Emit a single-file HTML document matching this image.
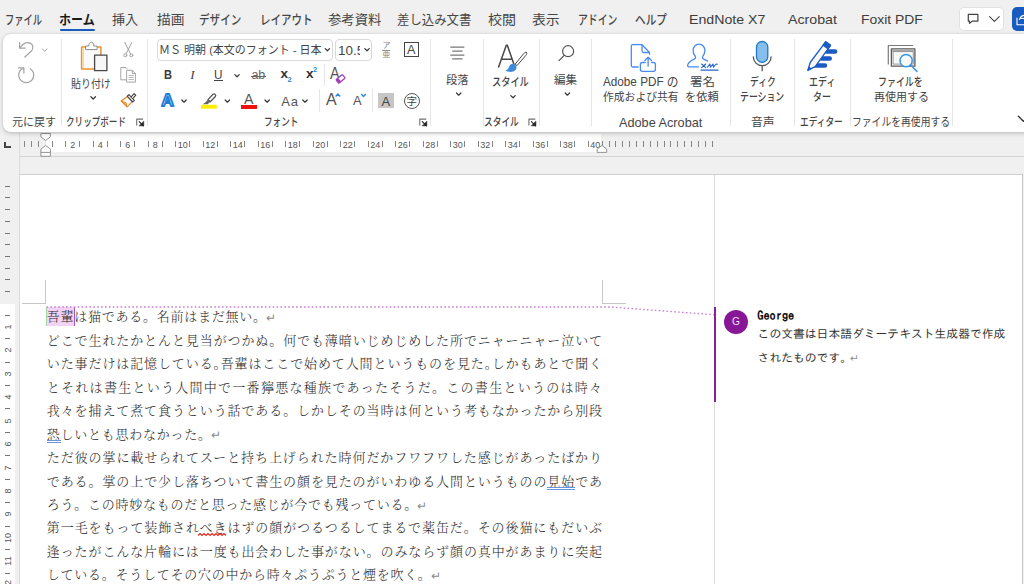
<!DOCTYPE html>
<html lang="ja"><head><meta charset="utf-8"><title>Word</title>
<style>
html,body{margin:0;padding:0}
body{width:1024px;height:584px;overflow:hidden;background:#f0f0f0;position:relative;font-family:'Liberation Sans', 'Noto Sans CJK JP', sans-serif;color:#242424}
.a{position:absolute}
.t{position:absolute;white-space:nowrap;line-height:1;transform-origin:0 50%;color:#454545}
.ic{height:auto;transform:translateY(-50%)}
.sep{position:absolute;width:1px;background:#e6e6e6;top:39px;height:87px}
.bl{position:absolute;white-space:nowrap;font-family:'Liberation Serif', 'Noto Serif CJK SC', serif;font-size:13px;letter-spacing:.75px;line-height:20px;height:20px;left:46.800px;width:556px;color:#2a2a2a;font-weight:300}
.bl.j{text-align:justify;text-align-last:justify}
.hp{letter-spacing:-6.100px}
.pm{letter-spacing:0;color:#8c8c8c;font-family:'DejaVu Sans',sans-serif;font-size:11.5px;margin-left:-1px;position:relative;top:0.5px}
.rn{position:absolute;font-size:9px;line-height:10px;color:#555;width:20px;text-align:center;top:139.5px;font-family:'Liberation Sans', 'Noto Sans CJK JP', sans-serif}
.rt{position:absolute;width:1px;height:6px;top:141px;background:#858585}
.vt{position:absolute;left:5px;width:5px;height:1px;background:#777}
.vn{position:absolute;font-size:9px;line-height:10px;color:#555;width:20px;height:10px;text-align:center;left:-2.5px;transform:rotate(-90deg);font-family:'Liberation Sans', 'Noto Sans CJK JP', sans-serif}
</style></head><body>

<div class="a" style="left:46px;top:134px;width:555px;height:18px;background:#fff"></div>
<div class="a" style="left:19.5px;top:156px;width:1005px;height:1px;background:#d4d4d4"></div>
<div class="a" style="left:4px;top:142px;width:2px;height:6px;background:#444"></div><div class="a" style="left:4px;top:146px;width:7px;height:2px;background:#444"></div>
<div class="rt" style="left:51.6px"></div>
<div class="rt" style="left:65.3px"></div>
<div class="rt" style="left:79.1px"></div>
<div class="rt" style="left:92.8px"></div>
<div class="rt" style="left:106.6px"></div>
<div class="rt" style="left:120.3px"></div>
<div class="rt" style="left:134.1px"></div>
<div class="rt" style="left:147.8px"></div>
<div class="rt" style="left:161.6px"></div>
<div class="rt" style="left:175.3px"></div>
<div class="rt" style="left:189.1px"></div>
<div class="rt" style="left:202.8px"></div>
<div class="rt" style="left:216.6px"></div>
<div class="rt" style="left:230.3px"></div>
<div class="rt" style="left:244.1px"></div>
<div class="rt" style="left:257.8px"></div>
<div class="rt" style="left:271.6px"></div>
<div class="rt" style="left:285.3px"></div>
<div class="rt" style="left:299.1px"></div>
<div class="rt" style="left:312.8px"></div>
<div class="rt" style="left:326.6px"></div>
<div class="rt" style="left:340.3px"></div>
<div class="rt" style="left:354.1px"></div>
<div class="rt" style="left:367.8px"></div>
<div class="rt" style="left:381.6px"></div>
<div class="rt" style="left:395.3px"></div>
<div class="rt" style="left:409.1px"></div>
<div class="rt" style="left:422.8px"></div>
<div class="rt" style="left:436.6px"></div>
<div class="rt" style="left:450.3px"></div>
<div class="rt" style="left:464.1px"></div>
<div class="rt" style="left:477.8px"></div>
<div class="rt" style="left:491.6px"></div>
<div class="rt" style="left:505.3px"></div>
<div class="rt" style="left:519.1px"></div>
<div class="rt" style="left:532.8px"></div>
<div class="rt" style="left:546.6px"></div>
<div class="rt" style="left:560.3px"></div>
<div class="rt" style="left:574.1px"></div>
<div class="rt" style="left:587.8px"></div>
<div class="rn" style="left:62.7px">2</div>
<div class="rn" style="left:90.2px">4</div>
<div class="rn" style="left:117.7px">6</div>
<div class="rn" style="left:145.2px">8</div>
<div class="rn" style="left:172.7px">10</div>
<div class="rn" style="left:200.2px">12</div>
<div class="rn" style="left:227.7px">14</div>
<div class="rn" style="left:255.2px">16</div>
<div class="rn" style="left:282.7px">18</div>
<div class="rn" style="left:310.2px">20</div>
<div class="rn" style="left:337.7px">22</div>
<div class="rn" style="left:365.2px">24</div>
<div class="rn" style="left:392.7px">26</div>
<div class="rn" style="left:420.2px">28</div>
<div class="rn" style="left:447.7px">30</div>
<div class="rn" style="left:475.2px">32</div>
<div class="rn" style="left:502.7px">34</div>
<div class="rn" style="left:530.2px">36</div>
<div class="rn" style="left:557.7px">38</div>
<div class="rn" style="left:585.2px">40</div>
<div class="rt" style="left:37.8px"></div>
<div class="rt" style="left:31.0px"></div>
<div class="rt" style="left:24.1px"></div>
<div class="rt" style="left:601.6px"></div>
<div class="rt" style="left:608.5px"></div>
<div class="rt" style="left:615.3px"></div>
<div class="rt" style="left:622.2px"></div>
<div class="rt" style="left:629.1px"></div>
<div class="rt" style="left:636.0px"></div>
<div class="rt" style="left:642.8px"></div>
<div class="rt" style="left:649.7px"></div>
<div class="rt" style="left:656.6px"></div>
<div class="rt" style="left:663.5px"></div>
<div class="rt" style="left:670.3px"></div>
<div class="rt" style="left:677.2px"></div>
<div class="rt" style="left:684.1px"></div>
<div class="rt" style="left:691.0px"></div>
<div class="rt" style="left:697.8px"></div>
<div class="rt" style="left:704.7px"></div>
<div class="rt" style="left:711.6px"></div>
<svg class="a" style="left:39px;top:132px" width="14" height="26" viewBox="39 132 14 26"><path d="M40.900 133.500h9.500v3.300l-4.750 3.700-4.750-3.700z" fill="#fff" stroke="#929292" stroke-width="1"/><path d="M40.900 156.300h9.500v-7.200l-4.750-3.700-4.750 3.700z M40.900 152.400h9.500" fill="#fff" stroke="#929292" stroke-width="1"/></svg>
<svg class="a" style="left:595px;top:144px" width="14" height="10" viewBox="595 144 14 10"><path d="M597.200 152.400h9.500v-3.300l-4.750-3.700-4.750 3.700z" fill="#fff" stroke="#929292" stroke-width="1"/></svg>
<div class="a" style="left:19px;top:133px;width:1px;height:451px;background:#dcdcdc"></div>
<div class="a" style="left:20px;top:174px;width:1003px;height:420px;background:#fff;border-top:1px solid #cfcfcf;border-right:1px solid #c6c6c6;box-sizing:border-box"></div>
<div class="a" style="left:714px;top:175px;width:1px;height:409px;background:#d9d9d9"></div>
<div class="a" style="left:0;top:304px;width:15px;height:280px;background:#fff"></div>
<div class="vt" style="top:291.2px"></div>
<div class="vt" style="top:279.4px"></div>
<div class="vt" style="top:267.7px"></div>
<div class="vt" style="top:256.0px"></div>
<div class="vt" style="top:244.3px"></div>
<div class="vt" style="top:232.5px"></div>
<div class="vt" style="top:220.8px"></div>
<div class="vt" style="top:209.1px"></div>
<div class="vt" style="top:197.4px"></div>
<div class="vt" style="top:185.6px"></div>
<div class="vt" style="top:314.6px"></div>
<div class="vn" style="top:321.8px">1</div>
<div class="vt" style="top:338.1px"></div>
<div class="vn" style="top:345.3px">2</div>
<div class="vt" style="top:361.5px"></div>
<div class="vn" style="top:368.8px">3</div>
<div class="vt" style="top:385.0px"></div>
<div class="vn" style="top:392.2px">4</div>
<div class="vt" style="top:408.4px"></div>
<div class="vn" style="top:415.6px">5</div>
<div class="vt" style="top:431.9px"></div>
<div class="vn" style="top:439.1px">6</div>
<div class="vt" style="top:455.3px"></div>
<div class="vn" style="top:462.5px">7</div>
<div class="vt" style="top:478.8px"></div>
<div class="vn" style="top:486.0px">8</div>
<div class="vt" style="top:502.2px"></div>
<div class="vn" style="top:509.4px">9</div>
<div class="vt" style="top:525.7px"></div>
<div class="vn" style="top:532.9px">10</div>
<div class="vt" style="top:549.1px"></div>
<div class="vn" style="top:556.3px">11</div>
<div class="vt" style="top:572.6px"></div>
<div class="vn" style="top:579.8px">12</div>
<div class="a" style="left:45px;top:280px;width:1px;height:24px;background:#c6c6c6"></div><div class="a" style="left:22px;top:303px;width:24px;height:1px;background:#c6c6c6"></div>
<div class="a" style="left:602px;top:280px;width:1px;height:24px;background:#c6c6c6"></div><div class="a" style="left:602px;top:303px;width:24px;height:1px;background:#c6c6c6"></div>
<div class="a" style="left:46.5px;top:306.5px;width:27.5px;height:19px;background:#f2d3f6"></div>
<div class="a" style="left:46px;top:307px;width:1px;height:19px;background:#a6d8a6"></div>
<div class="a" style="left:74px;top:307px;width:1px;height:19px;background:#b054c2"></div>
<svg class="a" style="left:40px;top:300px" width="680" height="20" viewBox="0 0 680 20"><path d="M6.500 7H570L674 14.700" fill="none" stroke="#c77dd2" stroke-width="1.3" stroke-dasharray="1.600 2.300"/></svg>
<div class="bl" style="top:307.4px">吾輩は猫である。名前はまだ無い。<span class="pm">↵</span></div>
<div class="bl j" style="top:330.8px">どこで生れたかとんと見当がつかぬ。何でも薄暗いじめじめした所でニャーニャー泣いて</div>
<div class="bl j" style="top:354.3px">いた事だけは記憶している<span class="hp">。</span>吾輩はここで始めて人間というものを見た<span class="hp">。</span>しかもあとで聞く</div>
<div class="bl j" style="top:377.8px">とそれは書生という人間中で一番獰悪な種族であったそうだ。この書生というのは時々</div>
<div class="bl j" style="top:401.2px">我々を捕えて煮て食うという話である。しかしその当時は何という考もなかったから別段</div>
<div class="bl" style="top:424.6px">恐しいとも思わなかった。<span class="pm">↵</span></div>
<div class="bl j" style="top:448.1px">ただ彼の掌に載せられてスーと持ち上げられた時何だかフワフワした感じがあったばかり</div>
<div class="bl j" style="top:471.5px">である。掌の上で少し落ちついて書生の顔を見たのがいわゆる人間というものの見始であ</div>
<div class="bl" style="top:495.0px">ろう。この時妙なものだと思った感じが今でも残っている。<span class="pm">↵</span></div>
<div class="bl j" style="top:518.4px">第一毛をもって装飾されべきはずの顔がつるつるしてまるで薬缶だ。その後猫にもだいぶ</div>
<div class="bl j" style="top:541.9px">逢ったがこんな片輪には一度も出会わした事がない。のみならず顔の真中があまりに突起</div>
<div class="bl" style="top:565.3px">している。そうしてその穴の中から時々ぷうぷうと煙を吹く。<span class="pm">↵</span></div>
<div class="a" style="left:46.5px;top:440.0px;width:14.0px;height:3px;border-top:1px solid #6a94e0;border-bottom:1px solid #6a94e0;box-sizing:border-box"></div>
<div class="a" style="left:547.0px;top:487.0px;width:27.5px;height:3px;border-top:1px solid #6a94e0;border-bottom:1px solid #6a94e0;box-sizing:border-box"></div>
<svg class="a" style="left:198px;top:532px" width="30" height="5" viewBox="0 0 30 5"><path d="M0 3.500l2-2 2 2 2-2 2 2 2-2 2 2 2-2 2 2 2-2 2 2 2-2 2 2 2-2 2 2" fill="none" stroke="#e5241c" stroke-width="1.100"/></svg>
<div class="a" style="left:714px;top:306.5px;width:2.4px;height:95px;background:#8a1f9c"></div>
<div class="a" style="left:724px;top:310px;width:24px;height:24px;border-radius:50%;background:#881798"></div>
<span class="t" style="left:724px;top:322px;width:24px;text-align:center;font-size:10.2px;height:10.2px;margin-top:-5.3px;color:rgba(255,255,255,.88)">G</span>
<span class="t" style="left:757.3px;top:315.3px;font-size:12.3px;height:12.3px;margin-top:-6.15px;font-family:'IPAGothic', 'Noto Sans CJK JP', sans-serif;font-weight:700;color:#111">George</span>
<span class="t" style="left:757.6px;top:334.3px;font-size:11.8px;height:11.8px;margin-top:-5.9px;font-family:'IPAGothic', 'Noto Sans CJK JP', sans-serif;color:#333">この文書は日本語ダミーテキスト生成器で作成</span>
<span class="t" style="left:757.6px;top:357.6px;font-size:11.8px;height:11.8px;margin-top:-5.9px;font-family:'IPAGothic', 'Noto Sans CJK JP', sans-serif;color:#333">されたものです。<span class="pm" style="font-size:10.500px;margin-left:-2px;top:0">↵</span></span>
<div class="a" style="left:60px;top:28.500px;width:34.600px;height:2.300px;background:#185abd;border-radius:1px"></div>
<div class="a" style="left:958.8px;top:7px;width:45.4px;height:23.5px;box-sizing:border-box;border:1px solid #e1e1e1;border-radius:5px;background:#fff"></div>
<svg class="a" style="left:959px;top:7px" width="46" height="24" viewBox="959 7 46 24" fill="none"><path d="M968.300 14.400h9.600v6.800h-5.800l-2.600 2.200v-2.200h-1.200z" stroke="#444" stroke-width="1.200" stroke-linejoin="round"/><path d="M989.600 16.700l4.800 4.700 4.800-4.700" stroke="#444" stroke-width="1.100" stroke-linecap="round" stroke-linejoin="round"/></svg>
<div class="a" style="left:1012px;top:7px;width:24px;height:23.5px;border-radius:5px;background:#185abd"></div>
<svg class="a" style="left:1012px;top:7px" width="12" height="24" viewBox="1012 7 12 24" fill="none" stroke="#fff" stroke-width="1.100"><path d="M1017 17.700v7h8"/><path d="M1019.500 20c.3-2.600 2-4.300 5-4.700"/><path d="M1020.300 18.400h4"/></svg>
<div class="a" style="left:3px;top:34px;width:1040px;height:97.5px;background:#fff;border-radius:8px;box-shadow:0 1.5px 4px rgba(0,0,0,.17),0 0 2px rgba(0,0,0,.10)"></div>
<div class="sep" style="left:60.5px"></div>
<div class="sep" style="left:147px"></div>
<div class="sep" style="left:430.2px"></div>
<div class="sep" style="left:483.1px"></div>
<div class="sep" style="left:539.1px"></div>
<div class="sep" style="left:591px"></div>
<div class="sep" style="left:730px"></div>
<div class="sep" style="left:793.5px"></div>
<div class="sep" style="left:850.2px"></div>
<div class="sep" style="left:952px"></div>
<div class="sep" style="left:323.5px;top:64px;height:22px"></div>
<div class="sep" style="left:318.5px;top:89px;height:23px"></div>
<div class="sep" style="left:371.8px;top:89px;height:23px"></div>
<div class="a" style="left:156.5px;top:39px;width:176px;height:22px;box-sizing:border-box;border:1px solid #d9d9d9;border-radius:4px;background:#fff"></div>
<div class="a" style="left:335.2px;top:39px;width:36.6px;height:22px;box-sizing:border-box;border:1px solid #d9d9d9;border-radius:4px;background:#fff"></div>
<!-- undo/redo -->
<svg class="a" style="left:0;top:34px" width="160" height="98" viewBox="0 34 160 98" fill="none" stroke-linecap="round" stroke-linejoin="round">
<g stroke="#a3a3a3" stroke-width="1.2">
<path d="M19.600 42.500v5.600h5.600"/><path d="M19.900 47.800C22.500 44.300 26 42 29.300 42.800C33.300 43.800 34 48.500 31.200 51.300L24.800 57"/>
<path d="M42.300 48.800l2.400 2.400 2.400-2.400" stroke-width="1"/>
<path d="M18.600 67.900h5.300v5.300"/><path d="M23.600 68.200C20.600 69.300 18.700 72 18.700 75.100a7.500 7.500 0 1 0 11.600-6.300"/>
</g>
<!-- paste -->
<path d="M81.600 46.900h19.300v22.200h-19.300z" fill="#fafafa" stroke="#e8912d" stroke-width="1.500"/>
<path d="M82.400 47.700h1.600v20.600h-1.600z" fill="#fbd7a0" stroke="none"/>
<path d="M85.500 49.200v-3.200h3.300c0-2.200 1-3.800 2.500-3.800s2.500 1.600 2.500 3.800h3.300v3.200z" fill="#fff" stroke="#8c8c8c" stroke-width="1"/>
<path d="M94.600 55.200h12.300v15.500h-12.300z" fill="#f7f7f7" stroke="#484848" stroke-width="1.300"/>
<!-- scissors -->
<g stroke="#a0a0a0" stroke-width="1">
<path d="M124.800 42.400l5.600 11.200M131.800 42.400l-5.600 11.200"/><circle cx="125.300" cy="55.300" r="1.500"/><circle cx="131.300" cy="55.300" r="1.500"/>
</g>
<!-- copy -->
<g stroke="#a6a6a6" stroke-width="1">
<path d="M126.500 79.800h-5.700v-12.300h5.200l1.500 1.500"/>
<path d="M127 70.300h5.200l3.200 3.200v8.600h-8.400z" fill="#fff"/><path d="M132.200 70.300v3.200h3.200"/><path d="M129 75.500h4.400M129 77.500h4.400M129 79.500h4.400" stroke-width="0.900" stroke="#b0b0b0"/>
</g>
<!-- format painter -->
<path d="M121.200 101l6.300-4.600 4.800 5.300-5.200 5.200z" fill="#fff" stroke="#e8862a" stroke-width="1.200"/>
<path d="M121.600 101.200l4.400 1.400 1 3.700z" fill="#f2a24a" stroke="#e8862a" stroke-width="0.800"/>
<path d="M127.200 96.200l1.700-1.500 5.400 5.700-1.600 1.600z" fill="#fff" stroke="#444" stroke-width="1.100"/>
<path d="M131.200 96.800l2.900-3.200 1.700 1.600-2.900 3.200" fill="#fff" stroke="#444" stroke-width="1.100"/>
<!-- paste chevron -->
<path d="M90.900 96.700l2.300 2.300 2.300-2.300" stroke="#3a3a3a" stroke-width="1.250"/>
</svg>
<!-- font group text icons -->
<span class="t ic" style="left:163.600px;top:75px;font-size:13.200px;font-weight:700;color:#3a3a3a;transform:translateY(-50%) scaleX(.84)">B</span>
<span class="t ic" style="left:190.300px;top:75.100px;font-size:13.200px;font-style:italic;font-family:'Liberation Serif',serif;color:#444">I</span>
<span class="t ic" style="left:213.600px;top:74.700px;font-size:12.600px;color:#444;transform:translateY(-50%) scaleX(.93)">U</span>
<div class="a" style="left:213.500px;top:80px;width:9px;height:1px;background:#444"></div>
<span class="t ic" style="left:251.500px;top:74.6px;font-size:12.5px;color:#666;letter-spacing:-0.3px">ab</span>
<div class="a" style="left:250.500px;top:76.2px;width:15.500px;height:1px;background:#666"></div>
<span class="t ic" style="left:280.400px;top:74px;font-size:13.5px;font-weight:700;color:#333">x</span>
<span class="t ic" style="left:287.500px;top:80.400px;font-size:7.500px;font-weight:700;color:#2b88d8">2</span>
<span class="t ic" style="left:306.100px;top:74px;font-size:13.5px;font-weight:700;color:#333">x</span>
<span class="t ic" style="left:313.100px;top:70px;font-size:7.500px;font-weight:700;color:#2b88d8">2</span>
<span class="t ic" style="left:329.800px;top:73.3px;font-size:16.3px;color:#555;transform:translateY(-50%) scaleX(.88)">A</span>
<svg class="a" style="left:333px;top:72px" width="15" height="14" viewBox="333 72 15 14"><g transform="rotate(-40 340.600 78.900)"><rect x="336.400" y="76.600" width="8.400" height="4.600" rx=".8" fill="#fff" stroke="#a33fb8" stroke-width="1.250"/><rect x="336.400" y="76.600" width="3" height="4.600" fill="#a33fb8"/></g></svg>
<!-- row 3 -->
<svg class="a" style="left:156px;top:90px" width="24" height="21" viewBox="156 90 24 21"><text x="167.650" y="106.250" text-anchor="middle" font-family="'Liberation Sans',sans-serif" font-weight="700" font-size="16.800" fill="#fff" stroke="#1e7fd6" stroke-width="1.750" stroke-linejoin="round" transform="translate(167.650 0) scale(1.04 1) translate(-167.650 0)">A</text></svg>
<svg class="a" style="left:199px;top:91px" width="20" height="19" viewBox="199 91 20 19" fill="none"><path d="M208 99.600l5-5.300c1.400-1.300 3.500.700 2.300 2.200l-5 5.300z" stroke="#555" stroke-width="1.300" stroke-linejoin="round"/><path d="M202.700 104.300l2.800-2 2.500-2.700 2.300 2.200-2.600 2.500z" fill="#666" stroke="none"/><rect x="201" y="104.800" width="15.800" height="3.900" fill="#ffee00"/></svg>
<span class="t ic" style="left:243.900px;top:98.5px;font-size:14.2px;color:#555">A</span>
<div class="a" style="left:241px;top:104.800px;width:15.600px;height:3.900px;background:#f01010"></div>
<span class="t ic" style="left:281.200px;top:100.600px;font-size:13px;color:#555;letter-spacing:1px">Aa</span>
<span class="t ic" style="left:325.500px;top:99.800px;font-size:17.200px;color:#555;transform:translateY(-50%) scaleX(.93)">A</span>
<span class="t ic" style="left:352.600px;top:100.500px;font-size:13.700px;color:#555;transform:translateY(-50%) scaleX(.94)">A</span>
<svg class="a" style="left:334px;top:92px" width="34" height="7" viewBox="334 92 34 7" fill="none" stroke="#2b88d8" stroke-width="1.400"><path d="M335.600 96.500l2.300-2.400 2.300 2.400"/><path d="M361.200 94l2.300 2.400 2.300-2.400"/></svg>
<div class="a" style="left:378.100px;top:92.800px;width:15.800px;height:15.600px;background:#c8c6c4"></div>
<span class="t ic" style="left:381.500px;top:100.700px;font-size:13px;color:#444">A</span>
<div class="a" style="left:403.600px;top:92.500px;width:16.100px;height:16.100px;border:1.100px solid #555;border-radius:50%;box-sizing:border-box"></div>
<span class="t ic" style="left:406.400px;top:100.8px;font-size:10.500px;color:#444">字</span>
<!-- top right of font group -->
<span class="t ic" style="left:382.600px;top:45.600px;font-size:8px;color:#858585">ア</span>
<div class="a" style="left:382.400px;top:50.400px;width:7.400px;height:1px;background:#999"></div>
<span class="t ic" style="left:382.200px;top:54.600px;font-size:8px;color:#858585">亜</span>
<div class="a" style="left:404px;top:41.800px;width:15.200px;height:15.400px;border:1.200px solid #444;box-sizing:border-box"></div>
<span class="t ic" style="left:407.100px;top:49.900px;font-size:12.600px;color:#444">A</span>
<!-- big icons -->
<svg class="a" style="left:440px;top:38px" width="584" height="38" viewBox="440 38 584 38" fill="none" stroke-linecap="round" stroke-linejoin="round">
<!-- paragraph -->
<g stroke="#787878" stroke-width="1.25" stroke-linecap="butt"><path d="M450.300 47.200h14.100M452.200 51.050h10.300M450.300 55h14.100M452.200 58.900h10.300"/></g>
<!-- styles A -->
<g stroke="#484848" stroke-width="1.500"><path d="M498.600 67l7.700-21.700h1l7.600 21.700M501.600 59.300h10.500"/></g>
<path d="M526.300 52.400c.9.700.5 1.800-.300 2.800l-9 10.400-1.800-1.500 8.700-10.700c.8-.9 1.600-1.600 2.400-1z" fill="#fff" stroke="#484848" stroke-width="1"/>
<path d="M505.200 70.400c2.300-.2 3.300-1.800 4-3.900.8-2.300 3.200-3.300 5.300-2.200 2.100 1.200 2.800 3.700 1 5.700-2.300 2.500-7 2.400-10.300.4z" fill="#3d8bdb" stroke="none"/>
<!-- search -->
<g stroke="#555" stroke-width="1.200"><circle cx="568.100" cy="51.200" r="5.500"/><path d="M564.200 55.300l-5.200 5.400"/></g>
<!-- pdf -->
<g stroke="#4a8af4" stroke-width="1.300">
<path d="M638.200 67h-5.400a1.500 1.500 0 0 1-1.500-1.500v-19.300a1.500 1.500 0 0 1 1.500-1.500h9.200l7.500 7.800v1.800"/><path d="M642 44.900v6.100a1.500 1.500 0 0 0 1.500 1.500h5.800"/>
<path d="M645.200 62.500h-2.800a2 2 0 0 0-2 2v4.800a2 2 0 0 0 2 2h11a2 2 0 0 0 2-2v-4.800a2 2 0 0 0-2-2h-1.700"/><path d="M648.100 66.200v-8.700M644.800 60.500l3.300-3.200 3.400 3.200"/>
</g>
<!-- sign -->
<g stroke="#4a8af4" stroke-width="1.300">
<path d="M698.400 66.800h-9.400c-1.300 0-1.600-1-1.200-2.200 1-2.900 3.600-4.300 6-5.300 1.700-.7 2.200-1.800 1.400-3-1.300-1.500-2.100-3.500-2.100-5.700 0-3.700 2.500-6.500 5.900-6.500s5.900 2.800 5.900 6.500c0 2.200-.8 4.200-2.100 5.700-.8 1.200-.3 2.300 1.400 3 1.200.5 2.400 1 3.400 1.800"/>
</g>
<g stroke="#2364d2" stroke-width="1.100"><path d="M701.600 64l4.200 3.600M705.800 64l-4.200 3.600"/><path d="M707.500 67.200l2.400-3.200.6 3.200 2.500-3.200.5 3.200 2.600-3.200 1.300.200"/><path d="M701.100 70.100h16.900" stroke-width="1.400"/></g>
<!-- mic -->
<rect x="756.500" y="41.500" width="11.300" height="20.800" rx="5.650" fill="#86bfec" stroke="#1e78c8" stroke-width="1.300"/>
<path d="M753.300 56.800a8.900 8.900 0 0 0 17.800 0M762.200 65.700v5" stroke="#555" stroke-width="1.300"/>
<!-- editor -->
<g stroke="#1b5cc4" stroke-width="4.600"><path d="M826.500 51.500h8.600M821.500 58.500h8.200M815.500 65.500h9.400"/></g>
<path d="M825.600 41.800l4.900 3.500-15.300 21.300-7.300 3.600 2.300-7.700z" fill="#f8f8f8" stroke="#1b5cc4" stroke-width="1.300"/>
<path d="M825.600 41.800l4.900 3.500-2.500 3.500-4.900-3.500z" fill="#1b5cc4" stroke="#1b5cc4" stroke-width="1.300"/>
<path d="M807.900 70.200l1-3.200 2 1.600z" fill="#1b5cc4" stroke="#1b5cc4" stroke-width="1"/>
<!-- reuse -->
<path d="M888.300 64.600v-19.100h24.800" stroke="#7a7a7a" stroke-width="1.200" stroke-linecap="butt"/>
<rect x="891.400" y="48.800" width="23.500" height="17.400" fill="#fff" stroke="#5a5a5a" stroke-width="1.300"/>
<rect x="892" y="49.400" width="22.300" height="2.200" fill="#a8a8a8" stroke="none"/>
<rect x="893.500" y="51.600" width="19.800" height="12.500" fill="#f8f8f8" stroke="#8a8a8a" stroke-width="0.900"/>
<circle cx="906.100" cy="60.600" r="6.100" fill="#fafafa" stroke="#3a96dd" stroke-width="1.500"/><path d="M910.500 65l6.500 6.400" stroke="#3a96dd" stroke-width="1.500"/>
</svg>

<span class="t" id="l0" style="left:5.4px;top:19.7px;font-size:13px;height:13px;margin-top:-6.50px;font-family:'Liberation Sans', 'Noto Sans CJK JP', sans-serif;transform:scaleX(0.7121);;font-weight:500">ファイル</span>
<span class="t" id="l1" style="left:59.0px;top:19.7px;font-size:13px;height:13px;margin-top:-6.50px;font-family:'Liberation Sans', 'Noto Sans CJK JP', sans-serif;transform:scaleX(0.9248);font-weight:700;color:#1a1a1a">ホーム</span>
<span class="t" id="l2" style="left:112.0px;top:19.7px;font-size:13px;height:13px;margin-top:-6.50px;font-family:'Liberation Sans', 'Noto Sans CJK JP', sans-serif;transform:scaleX(1.0082);">挿入</span>
<span class="t" id="l3" style="left:156.8px;top:19.7px;font-size:13px;height:13px;margin-top:-6.50px;font-family:'Liberation Sans', 'Noto Sans CJK JP', sans-serif;transform:scaleX(1.0561);">描画</span>
<span class="t" id="l4" style="left:199.0px;top:19.7px;font-size:13px;height:13px;margin-top:-6.50px;font-family:'Liberation Sans', 'Noto Sans CJK JP', sans-serif;transform:scaleX(0.8128);;font-weight:500">デザイン</span>
<span class="t" id="l5" style="left:259.7px;top:19.7px;font-size:13px;height:13px;margin-top:-6.50px;font-family:'Liberation Sans', 'Noto Sans CJK JP', sans-serif;transform:scaleX(0.8075);;font-weight:500">レイアウト</span>
<span class="t" id="l6" style="left:327.6px;top:19.7px;font-size:13px;height:13px;margin-top:-6.50px;font-family:'Liberation Sans', 'Noto Sans CJK JP', sans-serif;transform:scaleX(1.0280);">参考資料</span>
<span class="t" id="l7" style="left:397.0px;top:19.7px;font-size:13px;height:13px;margin-top:-6.50px;font-family:'Liberation Sans', 'Noto Sans CJK JP', sans-serif;transform:scaleX(0.9541);">差し込み文書</span>
<span class="t" id="l8" style="left:487.9px;top:19.7px;font-size:13px;height:13px;margin-top:-6.50px;font-family:'Liberation Sans', 'Noto Sans CJK JP', sans-serif;transform:scaleX(1.0804);">校閲</span>
<span class="t" id="l9" style="left:532.3px;top:19.7px;font-size:13px;height:13px;margin-top:-6.50px;font-family:'Liberation Sans', 'Noto Sans CJK JP', sans-serif;transform:scaleX(1.0667);">表示</span>
<span class="t" id="l10" style="left:577.8px;top:19.7px;font-size:13px;height:13px;margin-top:-6.50px;font-family:'Liberation Sans', 'Noto Sans CJK JP', sans-serif;transform:scaleX(0.7584);;font-weight:500">アドイン</span>
<span class="t" id="l11" style="left:635.0px;top:19.7px;font-size:13px;height:13px;margin-top:-6.50px;font-family:'Liberation Sans', 'Noto Sans CJK JP', sans-serif;transform:scaleX(0.8207);;font-weight:500">ヘルプ</span>
<span class="t" id="l12" style="left:689.0px;top:20.1px;font-size:13.5px;height:13.5px;margin-top:-6.75px;font-family:'Liberation Sans', 'Noto Sans CJK JP', sans-serif;transform:scaleX(1.0496);color:#3d3d3d">EndNote X7</span>
<span class="t" id="l13" style="left:788.0px;top:20.1px;font-size:13.5px;height:13.5px;margin-top:-6.75px;font-family:'Liberation Sans', 'Noto Sans CJK JP', sans-serif;transform:scaleX(1.0511);color:#3d3d3d">Acrobat</span>
<span class="t" id="l14" style="left:861.0px;top:20.1px;font-size:13.5px;height:13.5px;margin-top:-6.75px;font-family:'Liberation Sans', 'Noto Sans CJK JP', sans-serif;transform:scaleX(1.0306);color:#3d3d3d">Foxit PDF</span>
<span class="t" id="l15" style="left:11.9px;top:122.7px;font-size:11.5px;height:11.5px;margin-top:-5.75px;font-family:'Liberation Sans', 'Noto Sans CJK JP', sans-serif;transform:scaleX(0.9587);">元に戻す</span>
<span class="t" id="l16" style="left:66.0px;top:122.7px;font-size:11.5px;height:11.5px;margin-top:-5.75px;font-family:'Liberation Sans', 'Noto Sans CJK JP', sans-serif;transform:scaleX(0.7447);;font-weight:500">クリップボード</span>
<span class="t" id="l17" style="left:263.9px;top:122.7px;font-size:11.5px;height:11.5px;margin-top:-5.75px;font-family:'Liberation Sans', 'Noto Sans CJK JP', sans-serif;transform:scaleX(0.7453);;font-weight:500">フォント</span>
<span class="t" id="l18" style="left:484.2px;top:122.7px;font-size:11.5px;height:11.5px;margin-top:-5.75px;font-family:'Liberation Sans', 'Noto Sans CJK JP', sans-serif;transform:scaleX(0.7571);;font-weight:500">スタイル</span>
<span class="t" id="l19" style="left:619.0px;top:122.5px;font-size:13px;height:13px;margin-top:-6.50px;font-family:'Liberation Sans', 'Noto Sans CJK JP', sans-serif;transform:scaleX(0.9765);">Adobe Acrobat</span>
<span class="t" id="l20" style="left:750.8px;top:122.7px;font-size:11.5px;height:11.5px;margin-top:-5.75px;font-family:'Liberation Sans', 'Noto Sans CJK JP', sans-serif;transform:scaleX(1.0296);">音声</span>
<span class="t" id="l21" style="left:800.0px;top:122.7px;font-size:11.5px;height:11.5px;margin-top:-5.75px;font-family:'Liberation Sans', 'Noto Sans CJK JP', sans-serif;transform:scaleX(0.7548);;font-weight:500">エディター</span>
<span class="t" id="l22" style="left:852.0px;top:122.7px;font-size:11.5px;height:11.5px;margin-top:-5.75px;font-family:'Liberation Sans', 'Noto Sans CJK JP', sans-serif;transform:scaleX(0.8526);">ファイルを再使用する</span>
<span class="t" id="l23" style="left:71.2px;top:84.4px;font-size:11.8px;height:11.8px;margin-top:-5.90px;font-family:'Liberation Sans', 'Noto Sans CJK JP', sans-serif;transform:scaleX(0.8426);">貼り付け</span>
<span class="t" id="l24" style="left:446.0px;top:80.7px;font-size:11.8px;height:11.8px;margin-top:-5.90px;font-family:'Liberation Sans', 'Noto Sans CJK JP', sans-serif;transform:scaleX(0.9588);">段落</span>
<span class="t" id="l25" style="left:492.3px;top:83.2px;font-size:11.8px;height:11.8px;margin-top:-5.90px;font-family:'Liberation Sans', 'Noto Sans CJK JP', sans-serif;transform:scaleX(0.7798);;font-weight:500">スタイル</span>
<span class="t" id="l26" style="left:554.0px;top:80.7px;font-size:11.8px;height:11.8px;margin-top:-5.90px;font-family:'Liberation Sans', 'Noto Sans CJK JP', sans-serif;transform:scaleX(0.9835);">編集</span>
<span class="t" id="l27" style="left:602.6px;top:82.1px;font-size:12.8px;height:12.8px;margin-top:-6.40px;font-family:'Liberation Sans', 'Noto Sans CJK JP', sans-serif;transform:scaleX(0.9158);">Adobe PDF の</span>
<span class="t" id="l28" style="left:602.6px;top:98.3px;font-size:11.8px;height:11.8px;margin-top:-5.90px;font-family:'Liberation Sans', 'Noto Sans CJK JP', sans-serif;transform:scaleX(0.9158);">作成および共有</span>
<span class="t" id="l29" style="left:689.9px;top:83.3px;font-size:11.8px;height:11.8px;margin-top:-5.90px;font-family:'Liberation Sans', 'Noto Sans CJK JP', sans-serif;transform:scaleX(1.0641);">署名</span>
<span class="t" id="l30" style="left:685.4px;top:98.3px;font-size:11.8px;height:11.8px;margin-top:-5.90px;font-family:'Liberation Sans', 'Noto Sans CJK JP', sans-serif;transform:scaleX(0.9556);">を依頼</span>
<span class="t" id="l31" style="left:750.0px;top:83.3px;font-size:11.8px;height:11.8px;margin-top:-5.90px;font-family:'Liberation Sans', 'Noto Sans CJK JP', sans-serif;transform:scaleX(0.7457);;font-weight:500">ディク</span>
<span class="t" id="l32" style="left:739.6px;top:98.3px;font-size:11.8px;height:11.8px;margin-top:-5.90px;font-family:'Liberation Sans', 'Noto Sans CJK JP', sans-serif;transform:scaleX(0.7531);;font-weight:500">テーション</span>
<span class="t" id="l33" style="left:809.2px;top:83.3px;font-size:11.8px;height:11.8px;margin-top:-5.90px;font-family:'Liberation Sans', 'Noto Sans CJK JP', sans-serif;transform:scaleX(0.7641);;font-weight:500">エディ</span>
<span class="t" id="l34" style="left:812.9px;top:98.3px;font-size:11.8px;height:11.8px;margin-top:-5.90px;font-family:'Liberation Sans', 'Noto Sans CJK JP', sans-serif;transform:scaleX(0.7563);;font-weight:500">ター</span>
<span class="t" id="l35" style="left:878.3px;top:83.3px;font-size:11.8px;height:11.8px;margin-top:-5.90px;font-family:'Liberation Sans', 'Noto Sans CJK JP', sans-serif;transform:scaleX(0.7581);;font-weight:500">ファイルを</span>
<span class="t" id="l36" style="left:874.0px;top:98.3px;font-size:11.8px;height:11.8px;margin-top:-5.90px;font-family:'Liberation Sans', 'Noto Sans CJK JP', sans-serif;transform:scaleX(0.9330);">再使用する</span>
<span class="t" id="l37" style="left:159.4px;top:51.0px;font-size:11.8px;height:11.8px;margin-top:-5.90px;font-family:'Liberation Sans', 'Noto Sans CJK JP', sans-serif;transform:scaleX(0.9328);">ＭＳ 明朝 (本文のフォント - 日本</span>
<span class="t" id="l38" style="left:338.0px;top:50.3px;font-size:13px;height:13px;margin-top:-6.50px;font-family:'Liberation Sans', 'Noto Sans CJK JP', sans-serif;transform:scaleX(1.0320);">10.5</span>
<div class="a" style="left:359.8px;top:41px;width:4.5px;height:18px;background:#fff"></div>
<svg class="a" style="left:0;top:34px" width="1024" height="98" viewBox="0 34 1024 98" fill="none" stroke-linecap="round" stroke-linejoin="round">
<g stroke="#3a3a3a" stroke-width="1.25">
<path d="M325.2 48.6l2.200 2.200 2.200-2.200"/>
<path d="M364.8 48.6l2.200 2.200 2.200-2.200"/>
<path d="M234.8 74.6l2.200 2.200 2.200-2.200"/>
<path d="M181.8 100.0l2.200 2.200 2.200-2.200"/>
<path d="M225.2 100.0l2.200 2.200 2.200-2.200"/>
<path d="M265.0 100.0l2.200 2.200 2.200-2.200"/>
<path d="M302.8 100.0l2.200 2.200 2.200-2.200"/>
<path d="M456.5 93.0l2.200 2.200 2.200-2.200"/>
<path d="M510.8 95.6l2.200 2.200 2.200-2.200"/>
<path d="M565.2 93.0l2.200 2.200 2.200-2.200"/>
<path d="M1018.400 116.200l5 5 5-5" stroke-width="1.400"/>
</g>
<path d="M136.7 125.4v-6.300h6.400" stroke="#707070" stroke-width="1.100" stroke-linecap="butt"/>
<path d="M139.2 121.6l4.200 4.200" stroke="#222" stroke-width="1.100"/>
<path d="M139.4 125.8h4.300v-4.300z" fill="#222" stroke="#222" stroke-width=".6"/>
<path d="M419.8 125.4v-6.300h6.400" stroke="#707070" stroke-width="1.100" stroke-linecap="butt"/>
<path d="M422.3 121.6l4.200 4.200" stroke="#222" stroke-width="1.100"/>
<path d="M422.5 125.8h4.300v-4.300z" fill="#222" stroke="#222" stroke-width=".6"/>
<path d="M528.9 125.4v-6.300h6.400" stroke="#707070" stroke-width="1.100" stroke-linecap="butt"/>
<path d="M531.4 121.6l4.200 4.200" stroke="#222" stroke-width="1.100"/>
<path d="M531.6 125.8h4.300v-4.300z" fill="#222" stroke="#222" stroke-width=".6"/>
</svg>
</body></html>
